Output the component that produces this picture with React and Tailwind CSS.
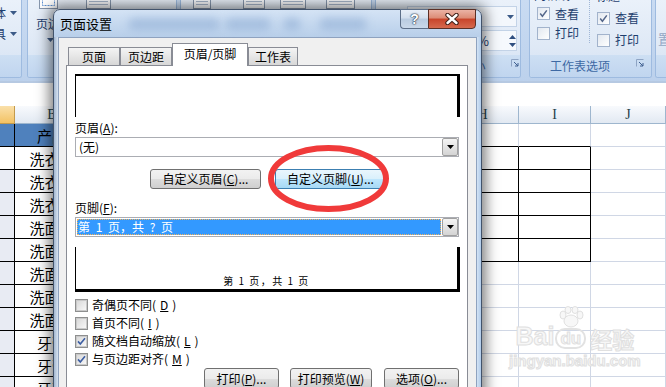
import React from 'react';

const ROWS = ['洗衣粉', '洗衣粉', '洗衣粉', '洗面奶', '洗面奶', '洗面奶', '洗面奶', '洗面奶', '牙膏', '牙膏', '牙膏'];

const groupCls =
  'flex h-[78px] shrink-0 flex-col overflow-hidden rounded-b-[3px] border border-t-0 border-[#9ebbe0] bg-[linear-gradient(180deg,#eaf1fa_0%,#dfe9f6_60%,#d4e2f3_100%)]';
const stripCls =
  'flex h-[22px] shrink-0 items-center bg-[linear-gradient(180deg,#cddff3,#c0d5ef)] text-[12px] leading-none text-[#3e69a4]';

function Arrow({ up, color = '#000', className = '' }) {
  return (
    <svg width="7" height="4" viewBox="0 0 7 4" className={className}>
      <path d={up ? 'M0 4h7L3.5 0z' : 'M0 0h7L3.5 4z'} fill={color} />
    </svg>
  );
}

function Launcher({ className = '' }) {
  return (
    <svg width="8" height="8" viewBox="0 0 8 8" className={className}>
      <path d="M0.5 7.5V0.5H7.5" fill="none" stroke="#8ea4c4" />
      <path d="M3 3L7 7M7 4V7H4" fill="none" stroke="#3e5f8f" />
    </svg>
  );
}

function RibbonIcon({ w, className = '' }) {
  return (
    <svg width={w} height="20" viewBox={`0 0 ${w} 20`} className={`-mt-[11px] shrink-0 ${className}`}>
      <rect x="0.5" y="0.5" width={w - 1} height="19" fill="#fbfcfe" stroke="#8797ad" />
      <path d={`M3 15.5H${w - 3}M3 12.5H${w - 3}`} stroke="#a9b8cc" />
    </svg>
  );
}

function RibbonCheck({ checked }) {
  return (
    <span className="flex h-[13px] w-[13px] shrink-0 items-center justify-center border border-[#a2b3cc] bg-[linear-gradient(135deg,#e2e8f0,#ffffff)]">
      {checked && (
        <svg width="9" height="9" viewBox="0 0 9 9">
          <path d="M1.2 4.6L3.4 7.2L7.8 1.4" fill="none" stroke="#55678a" strokeWidth="1.5" />
        </svg>
      )}
    </span>
  );
}

function Ribbon() {
  return (
    <div className="flex h-[81px] items-start bg-[linear-gradient(180deg,#c9dbf2,#bcd1ec)] text-[12px] leading-none text-[#1e3e6e]">
      <div className={`${groupCls} w-[22px] rounded-bl-none border-l-0`}>
        <div className="flex flex-1 flex-col pt-[2px]">
          <div className="-ml-[6px] flex h-[21px] items-center">
            <span>体</span>
            <Arrow color="#3b5a87" className="ml-[4px]" />
          </div>
          <div className="-ml-[6px] flex h-[21px] items-center">
            <span>具</span>
            <Arrow color="#3b5a87" className="ml-[4px]" />
          </div>
        </div>
        <div className={stripCls} />
      </div>

      <div className={`${groupCls} ml-[5px] w-[150px]`}>
        <div className="flex flex-1 items-start">
          <div className="ml-[4px] flex w-[44px] flex-col items-center">
            <svg width="20" height="20" viewBox="0 0 20 20" className="-ml-[10px] -mt-[11px]">
              <rect x="0.5" y="0.5" width="18" height="19" fill="#fff" stroke="#8797ad" />
              <rect x="3.5" y="3.5" width="12" height="13" fill="none" stroke="#5b8fd0" strokeDasharray="2 1" />
            </svg>
            <span className="mt-[9px]">页边距</span>
            <Arrow color="#3b5a87" className="-ml-[7px] mt-[8px]" />
          </div>
          <RibbonIcon w={25} className="ml-[10px]" />
        </div>
        <div className={stripCls}>
          <span className="flex-1 text-center">页面设置</span>
        </div>
      </div>

      <div className={`${groupCls} ml-[3px] w-[192px]`}>
        <div className="flex flex-1 items-start pl-[12px]">
          <RibbonIcon w={18} />
          <RibbonIcon w={22} className="ml-[32px]" />
          <RibbonIcon w={26} className="ml-[15px]" />
          <RibbonIcon w={29} className="ml-[20px]" />
        </div>
        <div className={stripCls} />
      </div>

      <div className={`${groupCls} ml-[3px] w-[146px]`}>
        <div className="flex flex-1 flex-col items-end gap-[3px] pr-[3px] pt-[6px]">
          <div className="flex h-[21px] w-[110px] items-center justify-end border border-[#c3d3e7] bg-[#f3f7fc] pr-[2px]">
            <Arrow color="#3b5a87" />
          </div>
          <div className="flex h-[21px] w-[110px] items-center justify-end border border-[#c3d3e7] bg-[#f6f9fd] pr-0">
            <span className="mr-[20px] text-[13px]">100%</span>
            <div className="flex flex-col gap-[4px]">
              <Arrow up color="#2f4f80" />
              <Arrow color="#2f4f80" />
            </div>
          </div>
        </div>
        <div className={stripCls}>
          <span className="flex-1 text-center">调整为合适大小</span>
          <Launcher className="mb-[7px] mr-px" />
        </div>
      </div>

      <div className={`${groupCls} ml-[8px] w-[123px]`}>
        <div className="flex flex-1 items-start">
          <div className="-mt-[15px] flex h-[58px] w-[60px] flex-col border-r border-dotted border-[#9fb6d6] pl-[4px]">
            <div className="flex h-[22px] items-center">网格线</div>
            <div className="flex h-[22px] items-center gap-[5px] pl-[3px]">
              <RibbonCheck checked />
              查看
            </div>
            <div className="flex h-[22px] items-center gap-[5px] pl-[3px]">
              <RibbonCheck />
              打印
            </div>
          </div>
          <div className="-mt-[15px] flex flex-col pl-[6px]">
            <div className="flex h-[22px] items-center">标题</div>
            <div className="flex h-[22px] items-center gap-[5px] pl-[1px]">
              <RibbonCheck checked />
              查看
            </div>
            <div className="flex h-[22px] items-center gap-[5px] pl-[1px]">
              <RibbonCheck />
              打印
            </div>
          </div>
        </div>
        <div className={stripCls}>
          <span className="flex-1 pr-[6px] text-center">工作表选项</span>
          <Launcher className="mb-[7px] mr-[7px]" />
        </div>
      </div>

      <div className={`${groupCls} ml-[3px] flex-1 rounded-br-none border-r-0`}>
        <div className="flex-1 pl-[2px] pt-[32px] text-[13px] text-[#93a7c4]">置</div>
        <div className={stripCls} />
      </div>
    </div>
  );
}

function Sheet() {
  const hdr =
    "flex h-[18px] items-center justify-center border-b border-r border-[#9eb6ce] bg-[linear-gradient(180deg,#f8fafd,#e2e9f2)] font-['Liberation_Serif',serif] text-[14px] leading-none text-[#24404a]";
  return (
    <div className="flex flex-col">
      <div className="flex">
        <div className="h-[18px] w-[15px] border-b border-r border-[#c39a4c] bg-[linear-gradient(180deg,#fae0aa,#f3c264)]" />
        <div className={`${hdr} w-[75px]`}>B</div>
        <div className={`${hdr} w-[357px]`} />
        <div className={`${hdr} w-[72px]`}>H</div>
        <div className={`${hdr} w-[72px]`}>I</div>
        <div className={`${hdr} w-[75px]`}>J</div>
      </div>
      <div className="flex h-[23px]">
        <div className="w-[15px] border-b border-r border-black bg-[#4f81bd]" />
        <div className="flex w-[75px] items-center justify-center border-b border-r border-black bg-[#4f81bd] text-[15px] leading-none text-black">
          产品
        </div>
        <div className="w-[357px] border-b border-black bg-[#4f81bd]" />
        <div className="w-[72px] border-b border-r border-b-black border-r-[#d0d7e5]" />
        <div className="w-[72px] border-b border-r border-b-black border-r-[#d0d7e5]" />
        <div className="w-[75px] border-b border-r border-[#d0d7e5]" />
      </div>
      {ROWS.map((name, i) => {
        const boxed = i < 5;
        return (
          <div key={i} className="flex h-[23px]">
            <div className={`w-[15px] border-b border-r border-black ${i === 0 ? 'bg-white' : 'bg-[#e8ebf3]'}`} />
            <div className="flex w-[75px] items-center justify-center border-b border-r border-black text-[15px] leading-none text-black">
              {name}
            </div>
            <div className="w-[357px] border-b border-black" />
            <div className={`w-[72px] border-b border-r ${boxed ? 'border-black' : 'border-[#d0d7e5]'}`} />
            <div className={`w-[72px] border-b border-r ${boxed ? 'border-black' : 'border-[#d0d7e5]'}`} />
            <div className="w-[75px] border-b border-r border-[#d0d7e5]" />
          </div>
        );
      })}
    </div>
  );
}

function Watermark() {
  return (
    <div className="pointer-events-none absolute left-[509px] top-[306px] flex flex-col items-center text-[#f7f7f7] [-webkit-text-stroke:1px_#e0e0e0]">
      <div className="flex items-end font-['Liberation_Sans',sans-serif] font-bold leading-none">
        <span className="text-[25px]">Bai</span>
        <span className="ml-[1px] flex flex-col items-center">
          <svg width="30" height="22" viewBox="0 0 30 22">
            <g fill="#f7f7f7" stroke="#e0e0e0">
              <ellipse cx="15" cy="15" rx="7" ry="6" />
              <ellipse cx="7" cy="9" rx="3" ry="4" />
              <ellipse cx="12" cy="4" rx="3" ry="3.5" />
              <ellipse cx="19" cy="4" rx="3" ry="3.5" />
              <ellipse cx="24" cy="9" rx="3" ry="4" />
            </g>
          </svg>
          <span className="rounded-[10px] border-2 border-[#e2e2e2] px-[3px] text-[17px]">du</span>
        </span>
        <span className="ml-[4px] font-['Noto_Sans_CJK_SC',sans-serif] text-[22px]">经验</span>
      </div>
      <div className="mt-[4px] font-['Liberation_Sans',sans-serif] text-[15px] font-bold leading-none">jingyan.baidu.com</div>
    </div>
  );
}

function Check({ checked }) {
  return (
    <span className="flex h-[13px] w-[13px] shrink-0 items-center justify-center border border-[#8e8f8f] bg-white">
      <span className="flex h-[11px] w-[11px] items-center justify-center border border-[#c9c9c9] bg-[linear-gradient(135deg,#d9d9d9,#f7f7f7)]">
        {checked && (
          <svg width="9" height="9" viewBox="0 0 9 9">
            <path d="M1 4.4L3.3 7L8 1.2" fill="none" stroke="#3d5ea3" strokeWidth="1.6" />
          </svg>
        )}
      </span>
    </span>
  );
}

function Btn({ className = '', hot, children }) {
  const skin = hot
    ? 'border-[#3c7fb1] bg-[linear-gradient(180deg,#eaf6fd_0%,#d9f0fc_50%,#bee6fd_50%,#a7d9f5_100%)]'
    : 'border-[#707070] bg-[linear-gradient(180deg,#f2f2f2_0%,#ebebeb_50%,#dddddd_50%,#cfcfcf_100%)]';
  return (
    <div className={`flex shrink-0 items-center justify-center rounded-[3px] border text-[12px] leading-none text-black ${skin} ${className}`}>
      {children}
    </div>
  );
}

function Combo({ selected, children }) {
  return (
    <div className="flex h-[20px] w-[384px] items-stretch border border-[#abadb3] bg-white text-[12px] leading-none">
      <div className="flex flex-1 p-px">
        {selected ? (
          <div className="flex flex-1 items-center whitespace-pre bg-[#3399ff] pl-px text-white outline-1 outline-offset-[-1px] outline-dotted outline-[#f3b25a] [word-spacing:3px]">
            {children}
          </div>
        ) : (
          <div className="flex flex-1 items-center pl-[2px] text-black">{children}</div>
        )}
      </div>
      <div className="flex w-[16px] items-center justify-center rounded-[2px] border border-[#a0a0a0] bg-[linear-gradient(180deg,#f4f4f4,#e4e4e4_50%,#d4d4d4)]">
        <Arrow />
      </div>
    </div>
  );
}

function Acc({ k }) {
  return (
    <>
      (<span className="underline">{k}</span>)
    </>
  );
}

function Tab({ w, active, children }) {
  if (active) {
    return (
      <div className={`relative top-px z-10 flex h-[23px] items-center justify-center border border-b-0 border-[#898c95] bg-white pb-[2px] text-[12px] leading-none ${w}`}>
        {children}
      </div>
    );
  }
  return (
    <div className={`flex h-[18px] items-center justify-center border border-b-0 border-[#898c95] bg-[linear-gradient(180deg,#f4f4f4,#e6e6e6_50%,#d7d7d7)] text-[12px] leading-none ${w}`}>
      {children}
    </div>
  );
}

function PageSetupDialog() {
  return (
    <div className="absolute left-[53px] top-[9px] flex h-[400px] w-[429px] flex-col rounded-t-[7px] border border-[#42536b] bg-[linear-gradient(180deg,#d4e3f5_0%,#b7cee9_7%,#bed3ec_30%,#c6d9ef_100%)] shadow-[0_0_13px_4px_rgba(0,0,0,0.5)]">
      <div className="relative flex h-[27px] shrink-0 items-start justify-between">
        <span className="absolute left-[74px] top-[8px] h-[12px] w-[92px] rounded-full bg-[#86a6d0] opacity-50 blur-[4px]" />
        <span className="absolute left-[171px] top-[8px] h-[12px] w-[46px] rounded-full bg-[#86a6d0] opacity-50 blur-[4px]" />
        <span className="absolute left-[229px] top-[8px] h-[12px] w-[18px] rounded-full bg-[#86a6d0] opacity-50 blur-[4px]" />
        <span className="absolute left-[265px] top-[8px] h-[12px] w-[48px] rounded-full bg-[#86a6d0] opacity-50 blur-[4px]" />
        <span className="relative self-center pl-[6px] text-[13px] leading-none text-black">页面设置</span>
        <div className="relative -mt-px mr-[5px] flex h-[20px]">
          <div className="flex w-[28px] items-center justify-center rounded-bl-[4px] border border-r-0 border-[#5d6f88] bg-[linear-gradient(180deg,#e8eff8_0%,#d3dfed_45%,#b9cbe0_50%,#cad9ea_100%)] font-['Liberation_Sans',sans-serif] text-[14px] font-bold leading-none text-white [text-shadow:0_0_1px_#2d3b4d,0_0_1px_#2d3b4d,0_0_2px_#2d3b4d]">
            ?
          </div>
          <div className="flex w-[48px] items-center justify-center rounded-br-[4px] border border-[#5b3026] bg-[linear-gradient(180deg,#ebb3a5_0%,#dc8b75_45%,#c8442a_50%,#d66a4e_100%)]">
            <svg width="14" height="12" viewBox="0 0 14 12">
              <path d="M2.5 2L11.5 10M11.5 2L2.5 10" stroke="#3f2019" strokeWidth="4.4" strokeLinecap="round" />
              <path d="M2.5 2L11.5 10M11.5 2L2.5 10" stroke="#fff" strokeWidth="2.4" strokeLinecap="round" />
            </svg>
          </div>
        </div>
      </div>

      <div className="flex min-h-0 flex-1">
        <div className="w-[4px] bg-[linear-gradient(90deg,#a2b6cf,#d7e3f1)]" />
        <div className="flex flex-1 flex-col border border-[#8ea2bf] bg-[#f0f0f0] pl-[7px] pr-[8px] pt-[4px]">
          <div className="flex h-[23px] items-end pl-[2px]">
            <Tab w="w-[52px]">页面</Tab>
            <Tab w="w-[52px]">页边距</Tab>
            <Tab w="w-[76px]" active>
              页眉/页脚
            </Tab>
            <Tab w="w-[50px]">工作表</Tab>
          </div>
          <div className="flex flex-1 flex-col border border-[#898c95] bg-white pl-[8px] pt-[8px] text-[12px] leading-none text-black">
            <div className="h-[43px] w-[385px] shrink-0 border-l border-r-[3px] border-t-2 border-black" />
            <div className="mt-[3px] flex h-[16px] items-center">
              页眉<Acc k="A" />:
            </div>
            <div className="mt-px">
              <Combo>(无)</Combo>
            </div>
            <div className="mt-[12px] flex h-[20px] pl-[75px]">
              <Btn className="w-[111px]">
                自定义页眉<Acc k="C" />...
              </Btn>
              <Btn hot className="ml-[14px] w-[111px]">
                自定义页脚<Acc k="U" />...
              </Btn>
            </div>
            <div className="mt-[11px] flex h-[16px] items-center">
              页脚<Acc k="F" />:
            </div>
            <div className="mt-px">
              <Combo selected>第 1 页，共 ? 页</Combo>
            </div>
            <div className="mt-[10px] flex h-[45px] w-[385px] shrink-0 items-end justify-center whitespace-pre border-b-[3px] border-l border-r-[3px] border-black pb-[3px] text-[10px] tracking-[1.5px]">
              第 1 页，共 1 页
            </div>
            <div className="mt-[4px] flex flex-col">
              <div className="flex h-[18px] items-center gap-[4px]">
                <Check />
                奇偶页不同<Acc k="D" />
              </div>
              <div className="flex h-[18px] items-center gap-[4px]">
                <Check />
                首页不同<Acc k="I" />
              </div>
              <div className="flex h-[18px] items-center gap-[4px]">
                <Check checked />
                随文档自动缩放<Acc k="L" />
              </div>
              <div className="flex h-[18px] items-center gap-[4px]">
                <Check checked />
                与页边距对齐<Acc k="M" />
              </div>
            </div>
            <div className="flex h-[21px] w-[384px] justify-end gap-[11px]">
              <Btn className="w-[75px]">
                打印<Acc k="P" />...
              </Btn>
              <Btn className="w-[82px]">
                打印预览<Acc k="W" />
              </Btn>
              <Btn className="ml-px w-[75px]">
                选项<Acc k="O" />...
              </Btn>
            </div>
          </div>
        </div>
        <div className="w-[4px] bg-[linear-gradient(90deg,#d3e3f4,#b0cbea)]" />
      </div>
    </div>
  );
}

export default function App() {
  return (
    <div className="relative h-[387px] w-[666px] overflow-hidden bg-white font-['Noto_Sans_CJK_SC','Noto_Sans',sans-serif]">
      <Ribbon />
      <div className="h-[25px] border-t-[2px] border-[#b6c9e2] bg-white" />
      <Sheet />
      <Watermark />
      <PageSetupDialog />
      <svg className="absolute left-[265px] top-[142px]" width="128" height="74" viewBox="0 0 128 74">
        <ellipse cx="63.5" cy="36.5" rx="57.5" ry="30.5" fill="none" stroke="#f03a3a" strokeWidth="6" />
      </svg>
    </div>
  );
}
